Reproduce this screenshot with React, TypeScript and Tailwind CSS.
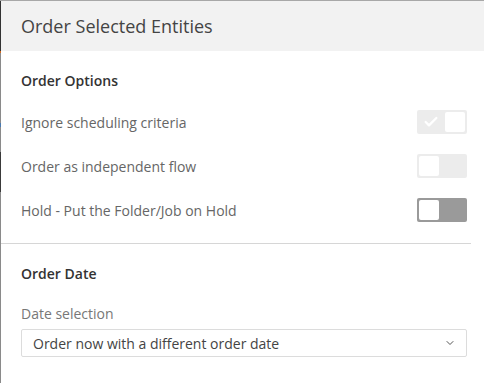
import { Check, ChevronDown } from "lucide-react";

const options = [
  { label: "Ignore scheduling criteria", state: "disabledOn" },
  { label: "Order as independent flow", state: "off" },
  { label: "Hold - Put the Folder/Job on Hold", state: "offDark" },
];

function Toggle({ state }: { state: string }) {
  if (state === "disabledOn") {
    return (
      <div className="flex h-6 w-[50px] items-center justify-between rounded-[2px] bg-[#ececec] p-[2px]">
        <Check className="ml-[4px] h-4 w-4 text-white" strokeWidth={3.5} />
        <div className="h-5 w-5 rounded-[2px] bg-white" />
      </div>
    );
  }
  return (
    <div
      className={
        state === "offDark"
          ? "flex h-6 w-[50px] items-center rounded-[2px] bg-[#9a9a9a] p-[2px]"
          : "flex h-6 w-[50px] items-center rounded-[2px] bg-[#ececec] p-[2px]"
      }
    >
      <div className="h-5 w-5 rounded-[2px] bg-white" />
    </div>
  );
}

export default function App() {
  return (
    <div className="flex h-[383px] w-[484px] bg-white font-['Open_Sans',sans-serif]">
      <div className="flex w-px flex-col bg-[#8a8a8a]">
        <div className="h-px bg-[#a3a3a3]" />
        <div className="h-[50px] bg-[#333]" />
        <div className="h-[2px] bg-[#d2691e]" />
        <div className="h-[70px]" />
        <div className="h-[4px] bg-[#4a7ab0]" />
        <div className="h-[25px]" />
        <div className="h-[40px] bg-[#3a3a3a]" />
      </div>
      <div className="flex flex-1 flex-col">
        <div className="h-px bg-[#a8a8a8]" />
        <div className="flex h-[50px] items-center bg-[#f2f2f2] pl-5 text-[18px] text-[#444]">
          Order Selected Entities
        </div>
        <div className="pl-5 pr-[17px] pt-[19px]">
          <div className="text-[14px] font-semibold text-[#333]">Order Options</div>
          <div className="mt-[19px] flex flex-col gap-5">
            {options.map((o) => (
              <div key={o.label} className="flex h-6 items-center justify-between">
                <span className="text-[14px] text-[#666]">{o.label}</span>
                <Toggle state={o.state} />
              </div>
            ))}
          </div>
        </div>
        <div className="mt-[21px] mr-[13px] h-px bg-[#d6d6d6]" />
        <div className="pl-5 pr-[17px] pt-[19px]">
          <div className="text-[14px] font-semibold text-[#333]">Order Date</div>
          <div className="mt-[19px] text-[14px] text-[#777]">Date selection</div>
          <div className="mt-[5px] flex h-[28px] items-center justify-between rounded-[2px] border border-[#dcdcdc] pl-[11px] pr-[10px]">
            <span className="text-[14px] text-[#444]">Order now with a different order date</span>
            <ChevronDown className="h-3 w-3 text-[#555]" strokeWidth={2} />
          </div>
        </div>
      </div>
    </div>
  );
}
